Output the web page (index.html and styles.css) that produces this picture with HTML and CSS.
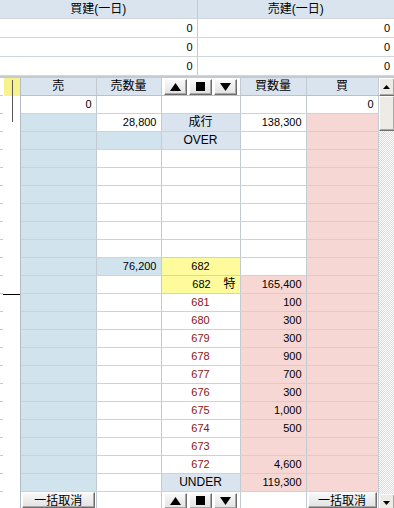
FILE: index.html
```html
<!DOCTYPE html>
<html lang="ja">
<head>
    <meta charset="UTF-8">
    <title>板</title>
    <link rel="stylesheet" href="styles.css">
</head>
<body>
<div class="panel">
    <table class="pos">
        <tr><th>買建(一日)</th><th>売建(一日)</th></tr>
        <tr><td>0</td><td>0</td></tr>
        <tr><td>0</td><td>0</td></tr>
        <tr><td>0</td><td>0</td></tr>
    </table>

    <div class="board">
        <div class="strip">
            <div class="strip-head"></div>
            <div class="strip-bar"></div>
            <div class="strip-mark"></div>
        </div>

        <table class="book">
            <colgroup>
                <col class="c-sell"><col class="c-sqty"><col class="c-price"><col class="c-bqty"><col class="c-buy">
            </colgroup>
            <tr class="head">
                <th>売</th>
                <th>売数量</th>
                <th class="ctl">
                    <div class="ctl-row">
                        <button class="btn"><svg width="11" height="8" viewBox="0 0 11 8"><path d="M5.5 0L11 8H0z"/></svg></button>
                        <button class="btn"><svg width="9" height="9" viewBox="0 0 9 9"><path d="M0 0h9v9H0z"/></svg></button>
                        <button class="btn"><svg width="11" height="8" viewBox="0 0 11 8"><path d="M0 0h11L5.5 8z"/></svg></button>
                    </div>
                </th>
                <th>買数量</th>
                <th>買</th>
            </tr>
            <tr><td>0</td><td></td><td></td><td></td><td>0</td></tr>
            <tr><td class="blue"></td><td>28,800</td><td class="mark">成行</td><td>138,300</td><td class="pink"></td></tr>
            <tr><td class="blue"></td><td class="blue"></td><td class="mark">OVER</td><td></td><td class="pink"></td></tr>
            <tr><td class="blue"></td><td></td><td></td><td></td><td class="pink"></td></tr>
            <tr><td class="blue"></td><td></td><td></td><td></td><td class="pink"></td></tr>
            <tr><td class="blue"></td><td></td><td></td><td></td><td class="pink"></td></tr>
            <tr><td class="blue"></td><td></td><td></td><td></td><td class="pink"></td></tr>
            <tr><td class="blue"></td><td></td><td></td><td></td><td class="pink"></td></tr>
            <tr><td class="blue"></td><td></td><td></td><td></td><td class="pink"></td></tr>
            <tr><td class="blue"></td><td class="blue">76,200</td><td class="price cur">682</td><td></td><td class="pink"></td></tr>
            <tr><td class="blue"></td><td></td><td class="price cur tok-cell"><span class="tok">特</span>682</td><td class="pink">165,400</td><td class="pink"></td></tr>
            <tr><td class="blue"></td><td></td><td class="price bid">681</td><td class="pink">100</td><td class="pink"></td></tr>
            <tr><td class="blue"></td><td></td><td class="price bid">680</td><td class="pink">300</td><td class="pink"></td></tr>
            <tr><td class="blue"></td><td></td><td class="price bid">679</td><td class="pink">300</td><td class="pink"></td></tr>
            <tr><td class="blue"></td><td></td><td class="price bid">678</td><td class="pink">900</td><td class="pink"></td></tr>
            <tr><td class="blue"></td><td></td><td class="price bid">677</td><td class="pink">700</td><td class="pink"></td></tr>
            <tr><td class="blue"></td><td></td><td class="price bid">676</td><td class="pink">300</td><td class="pink"></td></tr>
            <tr><td class="blue"></td><td></td><td class="price bid">675</td><td class="pink">1,000</td><td class="pink"></td></tr>
            <tr><td class="blue"></td><td></td><td class="price bid">674</td><td class="pink">500</td><td class="pink"></td></tr>
            <tr><td class="blue"></td><td></td><td class="price bid">673</td><td class="pink"></td><td class="pink"></td></tr>
            <tr><td class="blue"></td><td></td><td class="price bid">672</td><td class="pink">4,600</td><td class="pink"></td></tr>
            <tr><td class="blue"></td><td></td><td class="mark">UNDER</td><td class="pink">119,300</td><td class="pink"></td></tr>
            <tr class="foot">
                <td class="blue"><button class="btn wide">一括取消</button></td>
                <td></td>
                <td class="ctl">
                    <div class="ctl-row">
                        <button class="btn"><svg width="11" height="8" viewBox="0 0 11 8"><path d="M5.5 0L11 8H0z"/></svg></button>
                        <button class="btn"><svg width="9" height="9" viewBox="0 0 9 9"><path d="M0 0h9v9H0z"/></svg></button>
                        <button class="btn"><svg width="11" height="8" viewBox="0 0 11 8"><path d="M0 0h11L5.5 8z"/></svg></button>
                    </div>
                </td>
                <td></td>
                <td class="pink"><button class="btn wide">一括取消</button></td>
            </tr>
        </table>

        <div class="scroll">
            <div class="sb-btn"><svg width="7" height="4" viewBox="0 0 7 4"><path d="M3.5 0L7 4H0z"/></svg></div>
            <div class="sb-thumb"></div>
            <div class="sb-track"></div>
            <div class="sb-btn"><svg width="7" height="4" viewBox="0 0 7 4"><path d="M0 0h7L3.5 4z"/></svg></div>
        </div>
    </div>
</div>
</body>
</html>
```

FILE: styles.css
```css
body {
    margin: 0;
    background-color: #fff;
    font-family: "Liberation Sans", "Noto Sans CJK JP", sans-serif;
    font-size: 11px;
    color: #000;
}
.panel {
    width: 394px;
    height: 508px;
    overflow: hidden;
}
table {
    border-collapse: collapse;
    table-layout: fixed;
}
th, td {
    padding: 0 4px;
    height: 17px;
    line-height: 17px;
    white-space: nowrap;
    overflow: hidden;
}
th {
    font-weight: normal;
    font-size: 12px;
    background-color: #dae4ef;
    text-align: center;
}
td {
    text-align: right;
}

/* top position table */
.pos {
    width: 394px;
}
.pos th, .pos td {
    height: 18px;
    line-height: 18px;
    border-bottom: 1px solid #d0d6dc;
    border-left: 1px solid #c4cad2;
}
.pos th:first-child, .pos td:first-child {
    border-left: none;
}

/* board */
.board {
    display: flex;
    height: 434px;
    border-top: 2px solid #c4cad2;
}
.strip {
    width: 21px;
    flex: none;
    box-sizing: border-box;
    border-right: 1px solid #b4bcc6;
    background: repeating-linear-gradient(#fff 0 17px, #c4cad2 17px 18px) no-repeat 0 0 / 3px 100%, #fff;
}
.strip-head {
    margin-left: 4px;
    width: 16px;
    height: 18px;
    background-color: #f8f28a;
}
.strip-bar {
    margin-top: -16px;
    margin-left: 12px;
    width: 1px;
    height: 42px;
    background-color: #5a5a5a;
}
.strip-mark {
    margin-top: 172px;
    margin-left: 3px;
    width: 17px;
    height: 1px;
    background-color: #000;
}

.book {
    width: 357px;
    flex: none;
    align-self: flex-start;
}
.c-sell { width: 75px; }
.c-sqty { width: 65px; }
.c-price { width: 79px; }
.c-bqty { width: 66px; }
.c-buy { width: 72px; }
.book th, .book td {
    border-right: 1px solid #c4cad2;
    border-bottom: 1px solid #ccd2d8;
}
.book .head th {
    border-bottom-color: #b8c0c8;
}
.blue { background-color: #d1e4ee; }
.pink { background-color: #f6d7d3; }
.mark {
    background-color: #dae4ef;
    text-align: center;
    font-size: 12px;
}
.price {
    text-align: center;
    font-size: 11px;
}
.cur { background-color: #fdfb9c; }
.bid { color: #8e1414; }
.tok-cell { padding-left: 18px; }
.tok {
    float: right;
    font-size: 12px;
}

.ctl {
    background-color: #fff;
    padding: 0 2px;
}
.ctl-row {
    display: flex;
    gap: 2px;
    height: 17px;
    align-items: center;
}
.btn {
    box-sizing: border-box;
    flex: 1;
    height: 16px;
    margin: 0;
    padding: 0;
    display: flex;
    align-items: center;
    justify-content: center;
    background: linear-gradient(#f8f8f8, #e2e2e2);
    border: 1px solid;
    border-color: #fff #6e6e6e #6e6e6e #fff;
    box-shadow: inset -1px -1px #a8a8a8;
    font-family: "Noto Sans CJK JP", sans-serif;
    font-size: 12px;
    line-height: 14px;
    color: #000;
}
.foot td {
    height: 17px;
    vertical-align: top;
    border-bottom: none;
}
.foot .blue, .foot .pink {
    background-color: #fff;
    padding: 0 1px;
}
.btn.wide {
    width: 100%;
}

/* scrollbar */
.scroll {
    width: 16px;
    flex: none;
    display: flex;
    flex-direction: column;
}
.sb-btn, .sb-thumb {
    box-sizing: border-box;
    display: flex;
    align-items: center;
    justify-content: center;
    background-color: #ecebe6;
    border: 1px solid;
    border-color: #fff #6e6e6e #6e6e6e #fff;
    box-shadow: inset -1px -1px #a8a8a8;
}
.sb-btn {
    height: 18px;
}
.sb-thumb {
    height: 35px;
}
.sb-track {
    flex: 1;
    background-color: #fff;
    background-image: conic-gradient(#dcdad4 25%, #fff 0 50%, #dcdad4 0 75%, #fff 0);
    background-size: 2px 2px;
}
```
